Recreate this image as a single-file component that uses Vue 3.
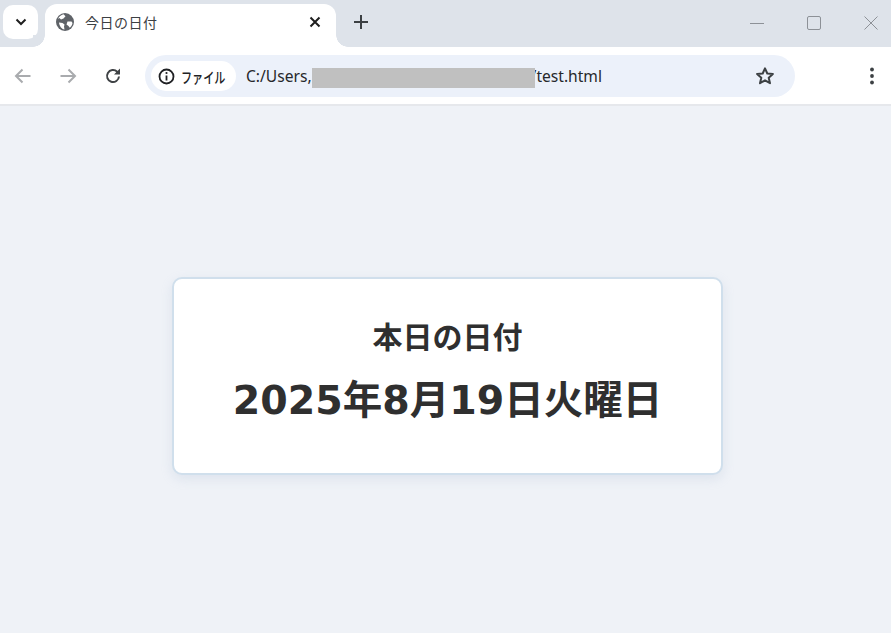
<template>
  <div class="window">
    <div class="tabstrip">
      <button class="tab-search" type="button">
        <svg width="12" height="8" viewBox="0 0 12 8"><path d="M1.500 1.500 6 6l4.500-4.500" fill="none" stroke="#1f1f1f" stroke-width="2"/></svg>
      </button>
      <div class="tab">
        <svg class="globe" width="18" height="18" viewBox="0 0 18 18">
          <circle cx="9" cy="9" r="9" fill="#5f6368"/>
          <path d="M7.500 1.200 9.500 3.200 7.500 5.500 5 6.500 3.500 5 2 6C3 3.500 5 1.800 7.500 1.200ZM3 9.500 6.500 10 8.500 11.500 8 13.500 8.500 16.500C5.500 16 3.300 13 3 9.500ZM11.500 8.500 15.500 8.500 16.500 10C16.200 12 15.200 13.600 13.800 14.800L12.500 13 10.500 11.500Z" fill="#fff"/>
        </svg>
        <span class="tab-title">今日の日付</span>
        <svg class="tab-close" width="12" height="12" viewBox="0 0 12 12"><path d="M1.500 1.500l9 9m0-9-9 9" stroke="#1f1f1f" stroke-width="2"/></svg>
      </div>
      <svg class="new-tab" width="14" height="14" viewBox="0 0 14 14"><path d="M7 0v14M0 7h14" stroke="#3c4043" stroke-width="2"/></svg>
      <div class="window-controls">
        <svg width="14" height="14" viewBox="0 0 14 14"><path d="M0 7.500h14" stroke="#8d9197" stroke-width="1"/></svg>
        <svg width="14" height="14" viewBox="0 0 14 14"><rect x=".5" y=".5" width="13" height="13" rx="1.500" fill="none" stroke="#8d9197"/></svg>
        <svg width="14" height="14" viewBox="0 0 14 14"><path d="M.5.500l13 13m0-13-13 13" stroke="#8d9197" stroke-width="1"/></svg>
      </div>
    </div>

    <div class="toolbar">
      <svg class="nav" width="18" height="16" viewBox="0 0 18 16"><path d="M16.500 8H2M8.500 1.500 2 8l6.500 6.500" fill="none" stroke="#a9abae" stroke-width="2"/></svg>
      <svg class="nav" width="18" height="16" viewBox="0 0 18 16"><path d="M1.500 8H16M9.500 1.500 16 8l-6.500 6.500" fill="none" stroke="#a9abae" stroke-width="2"/></svg>
      <svg class="nav" width="18" height="18" viewBox="0 0 18 18"><path d="M15 9.500A6 6 0 1 1 13.200 4.700L15 6.500" fill="none" stroke="#3f4245" stroke-width="2"/><path d="M16 1.500V7.500H10Z" fill="#3f4245"/></svg>
      <div class="omnibox">
        <div class="chip">
          <svg class="info" width="17" height="17" viewBox="0 0 17 17"><circle cx="8.500" cy="8.500" r="7" fill="none" stroke="#202124" stroke-width="1.800"/><path d="M8.500 7.500v5" stroke="#202124" stroke-width="1.800"/><circle cx="8.500" cy="5" r="1.100" fill="#202124"/></svg>
          <span class="chip-label">ファイル</span>
        </div>
        <div class="url">C:/Users,<span class="redact"></span>/test.html</div>
        <svg class="star" width="20" height="20" viewBox="0 0 20 20"><path d="M10 2.300l2.300 5.200 5.600.5-4.200 3.700 1.300 5.500L10 14.300l-5 2.900 1.300-5.500L2.100 8l5.600-.5z" fill="none" stroke="#3c4043" stroke-width="2" stroke-linejoin="round"/></svg>
      </div>
      <svg class="menu" width="4" height="18" viewBox="0 0 4 18"><circle cx="2" cy="2.500" r="1.900" fill="#3c4043"/><circle cx="2" cy="9" r="1.900" fill="#3c4043"/><circle cx="2" cy="15.500" r="1.900" fill="#3c4043"/></svg>
    </div>

    <main class="page">
      <div class="card">
        <h1>本日の日付</h1>
        <p>2025年8月19日火曜日</p>
      </div>
    </main>
  </div>
</template>

<script setup>
</script>

<style>
html, body { margin: 0; }
</style>

<style scoped>
.window {
  width: 891px;
  height: 633px;
  display: flex;
  flex-direction: column;
  overflow: hidden;
  font-family: "Noto Sans", "Noto Sans CJK JP", sans-serif;
}
.tabstrip {
  height: 47px;
  flex: none;
  background: #dee3ea;
  display: flex;
  align-items: flex-start;
  padding-left: 3px;
  box-sizing: border-box;
}
.tab-search {
  width: 35px;
  height: 34px;
  margin-top: 5px;
  padding: 0;
  border: none;
  border-radius: 10px;
  background: #fff;
  display: flex;
  align-items: center;
  justify-content: center;
}
.tab {
  position: relative;
  width: 291px;
  height: 43px;
  margin: 4px 0 0 7px;
  background: #fff;
  border-radius: 12px 12px 0 0;
  display: flex;
  align-items: center;
  padding: 0 15px 7px 11px;
  box-sizing: border-box;
}
.tab::before,
.tab::after {
  content: "";
  position: absolute;
  bottom: 0;
  width: 12px;
  height: 12px;
}
.tab::before {
  left: -12px;
  background: radial-gradient(circle at 0 0, #dee3ea 11.500px, #fff 12px);
}
.tab::after {
  right: -12px;
  background: radial-gradient(circle at 100% 0, #dee3ea 11.500px, #fff 12px);
}
.tab-title {
  margin-left: 11px;
  font-size: 14px;
  color: #3c4043;
  letter-spacing: 0.5px;
  flex: 1;
}
.new-tab {
  margin: 15px 0 0 18px;
}
.window-controls {
  margin: 16px 0 0 auto;
  padding-right: 13px;
  display: flex;
  gap: 43px;
}
.toolbar {
  height: 59px;
  flex: none;
  box-sizing: border-box;
  background: #fff;
  border-bottom: 2px solid #e6e8ec;
  display: flex;
  align-items: center;
  padding: 1px 17px 0 14px;
}
.nav {
  margin-right: 27px;
  flex: none;
}
.nav:nth-child(3) {
  margin-right: 23px;
}
.omnibox {
  width: 650px;
  height: 42px;
  border-radius: 21px;
  background: #ecf1fa;
  display: flex;
  align-items: center;
  padding: 0 20px 0 6px;
  box-sizing: border-box;
}
.chip {
  height: 30px;
  width: 85px;
  flex: none;
  border-radius: 15px;
  background: #fff;
  display: flex;
  align-items: center;
  gap: 6px;
  padding-left: 7px;
  box-sizing: border-box;
  font-size: 15px;
  font-weight: 500;
  color: #202124;
  overflow: hidden;
}
.info {
  flex: none;
}
.chip-label {
  display: inline-block;
  flex: none;
  white-space: nowrap;
  transform: scaleX(0.74);
  transform-origin: left center;
}
.url {
  margin-left: 10px;
  font-size: 15.600px;
  color: #26282b;
  display: flex;
  align-items: center;
  flex: 1;
  white-space: nowrap;
}
.redact {
  position: relative;
  width: 223px;
  height: 20px;
  margin: 4px -4px 0 0;
  background: #c0c0c0;
}
.menu {
  margin-left: auto;
}
.page {
  flex: 1;
  background: #eff2f7;
  display: flex;
  align-items: flex-start;
  justify-content: center;
  padding-top: 171px;
  padding-left: 4px;
  box-sizing: border-box;
}
.card {
  width: 551px;
  height: 198px;
  box-sizing: border-box;
  background: #fff;
  border: 2px solid #d0dfec;
  border-radius: 10px;
  box-shadow: 0 4px 12px rgba(150, 170, 200, 0.2);
  text-align: center;
  color: #2f2f2f;
  font-family: "DejaVu Sans", "Noto Sans CJK JP", sans-serif;
  font-weight: 700;
  padding-top: 35px;
}
h1 {
  margin: 0;
  font-size: 30px;
  line-height: 42px;
  font-family: "Noto Sans CJK JP", sans-serif;
}
p {
  margin: 15px 0 0;
  font-size: 39.500px;
  line-height: 58px;
}
</style>
